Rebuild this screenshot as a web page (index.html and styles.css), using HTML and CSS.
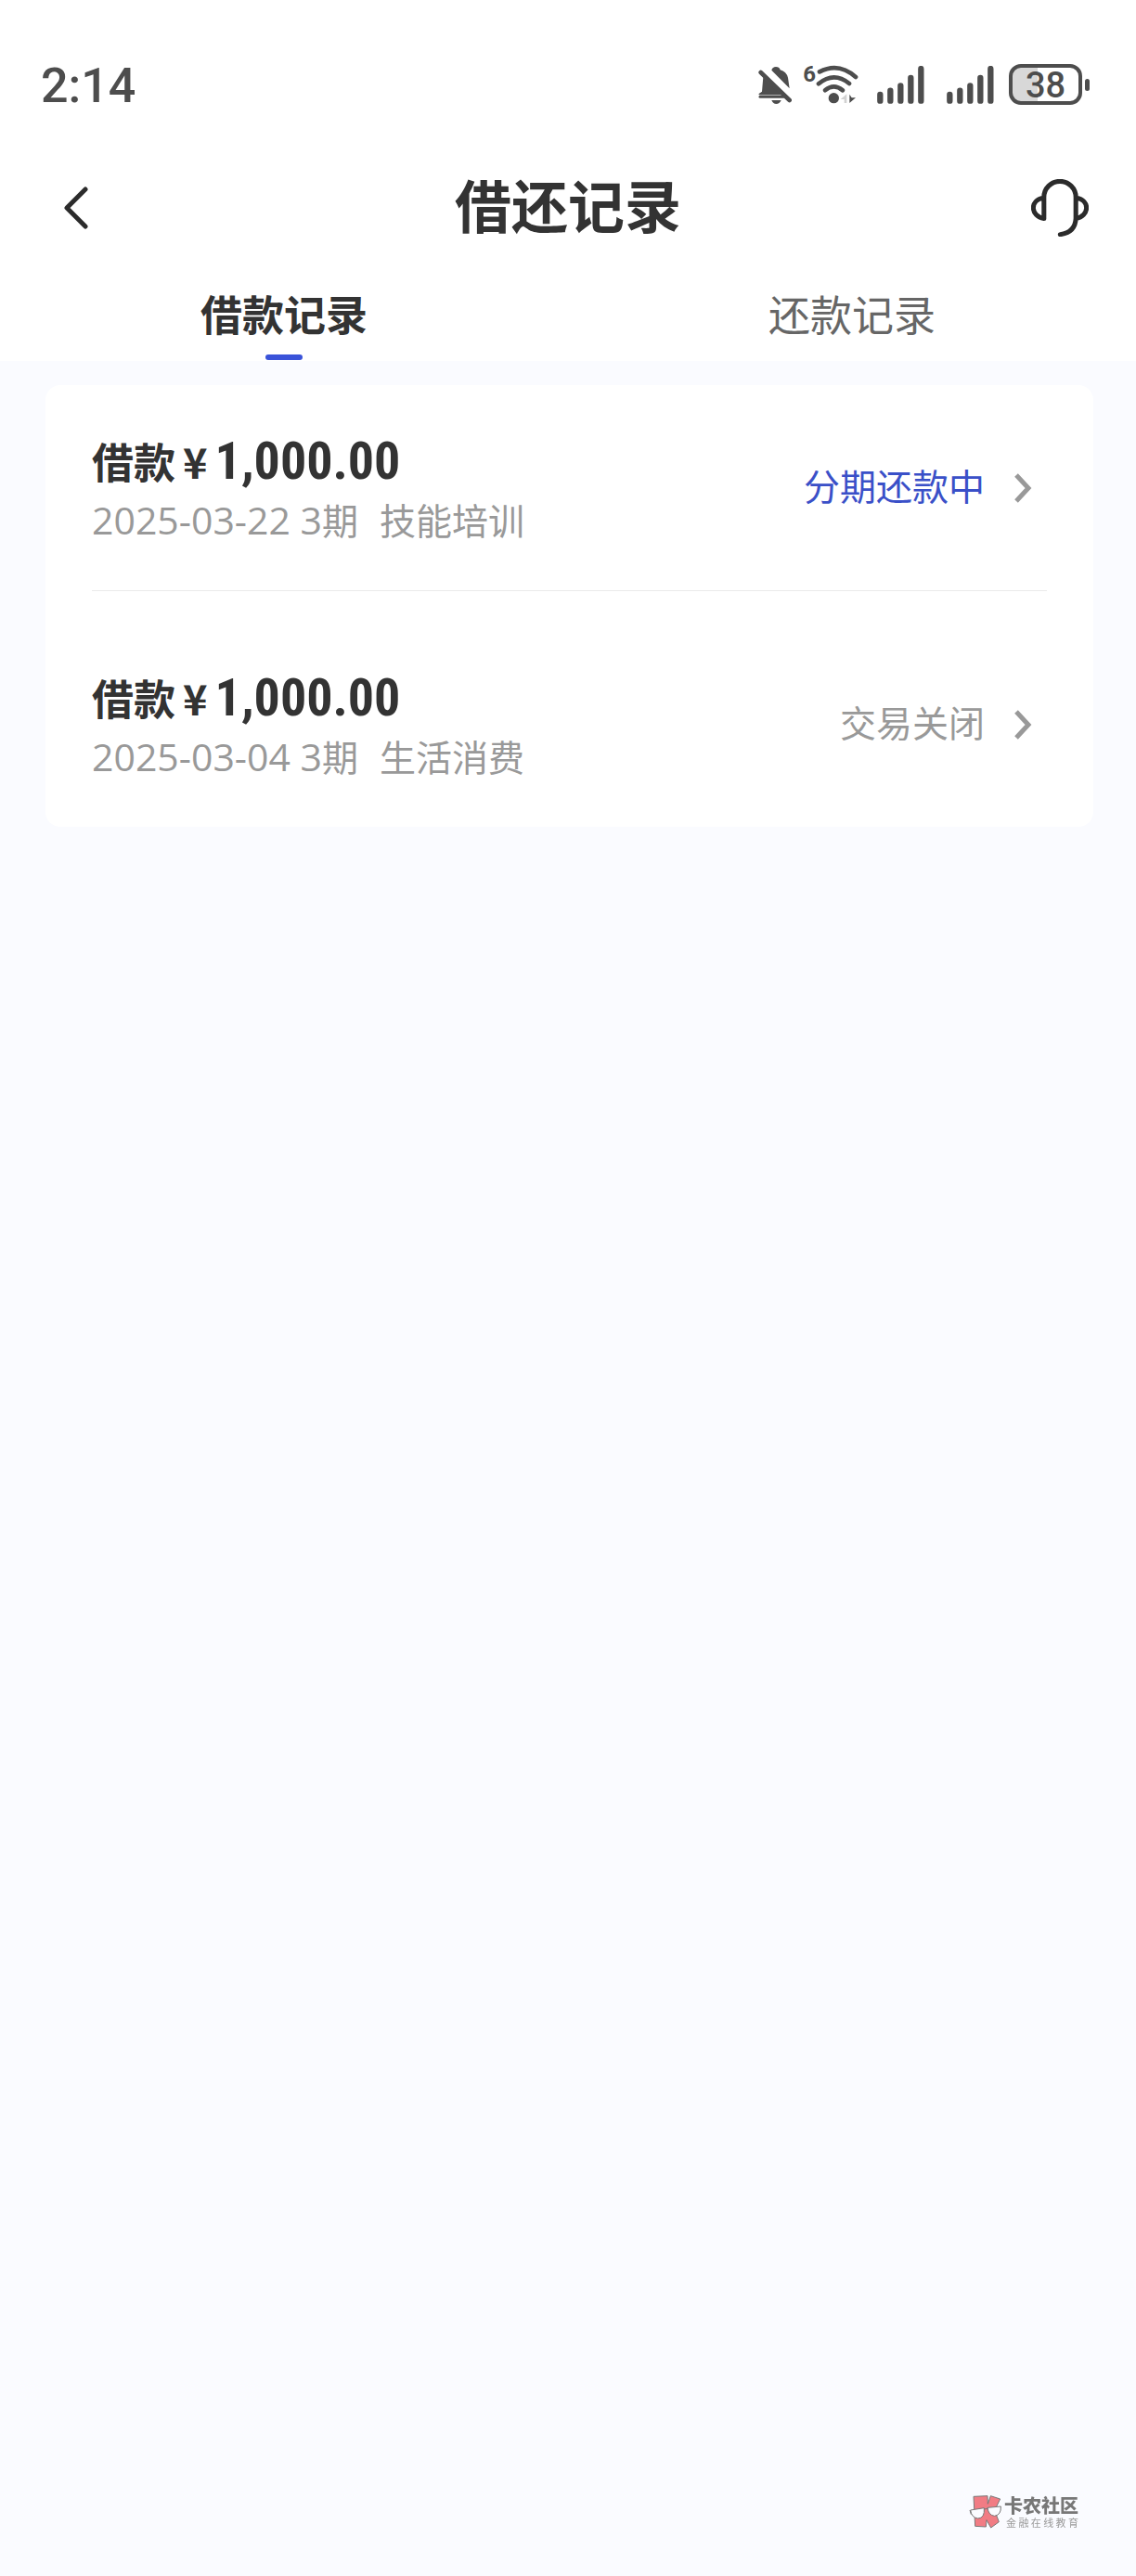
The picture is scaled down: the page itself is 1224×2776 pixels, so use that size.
FILE: index.html
```html
<!DOCTYPE html>
<html lang="zh-CN">
<head>
  <meta charset="UTF-8" />
  <meta name="viewport" content="width=device-width, initial-scale=1.0"/>
  <title>借还记录</title>
  <link rel="stylesheet" href="styles.css">
</head>
<body>

  <!-- Header -->
  <header class="header">
    <div class="status-bar">
      <span class="time">2:14</span>
      <div class="status-icons">
        <svg class="icon-mute" viewBox="50 60 108 123" aria-hidden="true">
          <path d="M66 96 L126 154 H54 Q50 154 52 150 L62 143 Z M93 74 Q96 63 107 63 Q118 63 121 73 Q141 79 146 98 L151 133 Z" fill="#4d4d4d"/>
          <path d="M58 81 L151 171" stroke="#4d4d4d" stroke-width="14" stroke-linecap="round"/>
          <path d="M56 160 H132" stroke="#4d4d4d" stroke-width="9" stroke-linecap="round"/>
          <path d="M93 171 H124 Q119 183 108 183 Q98 183 93 171 Z" fill="#4d4d4d"/>
        </svg>
        <div class="wifi">
          <span class="wifi-gen">6</span>
          <svg class="icon-wifi" viewBox="234 60 138 126" aria-hidden="true">
            <g fill="none" stroke="#4d4d4d" stroke-width="14" stroke-linecap="round">
              <path d="M246 82 Q308 50 363 99"/>
              <path d="M243 121 Q292 80 342 120"/>
              <path d="M264 142 Q292 118 321 142"/>
            </g>
            <circle cx="292" cy="167" r="17" fill="#4d4d4d"/>
            <path d="M314 171 L334 154 V183 H326 V171 Z" fill="#d2d2d2"/>
            <path d="M343 155 L350 166 H363 L343 183 Z" fill="#4d4d4d"/>
          </svg>
        </div>
        <svg class="icon-signal" viewBox="436 62 153 123" aria-hidden="true">
          <path d="M446 155 V175 M479 142 V175 M512 126 V175 M545 101 V175 M578 71 V175" stroke="#4d4d4d" stroke-width="19" stroke-linecap="round"/>
        </svg>
        <svg class="icon-signal" viewBox="436 62 153 123" aria-hidden="true">
          <path d="M446 155 V175 M479 142 V175 M512 126 V175 M545 101 V175 M578 71 V175" stroke="#4d4d4d" stroke-width="19" stroke-linecap="round"/>
        </svg>
        <div class="battery"><span class="battery-level">38</span></div>
      </div>
    </div>

    <div class="nav-bar">
      <button class="nav-btn" type="button" aria-label="返回">
        <svg class="icon-back" viewBox="0 0 26 46" aria-hidden="true">
          <path d="M23 3 L3 23 L23 43" fill="none" stroke="#2b2b2b" stroke-width="5" stroke-linecap="round" stroke-linejoin="round"/>
        </svg>
      </button>
      <h1 class="nav-title">借还记录</h1>
      <button class="nav-btn" type="button" aria-label="客服">
        <svg class="icon-service" viewBox="65 64 184 184" aria-hidden="true">
          <path d="M106 190 V122 A51 51 0 0 1 208 122 V190 Q206 235 158 241 M106 190 C62 182 60 132 104 124 M210 124 C254 132 252 182 208 190" fill="none" stroke="#2b2b2b" stroke-width="15" stroke-linecap="round" stroke-linejoin="round"/>
        </svg>
      </button>
    </div>

    <nav class="tabs">
      <a class="tab active" href="#borrow">借款记录</a>
      <a class="tab" href="#repay">还款记录</a>
    </nav>
  </header>

  <!-- Record List -->
  <main class="card" id="borrow">
    <a class="record" href="#record-1">
      <div class="record-info">
        <p class="record-title">借款<span class="currency">¥</span><span class="amount">1,000.00</span></p>
        <p class="record-desc"><span class="date">2025-03-22 3</span>期<span class="purpose">技能培训</span></p>
      </div>
      <span class="record-status repaying">分期还款中</span>
      <svg class="icon-arrow" viewBox="0 0 20 34" aria-hidden="true">
        <path d="M3 3 L16 17 L3 31" fill="none" stroke="#999" stroke-width="5"/>
      </svg>
    </a>
    <a class="record" href="#record-2">
      <div class="record-info">
        <p class="record-title">借款<span class="currency">¥</span><span class="amount">1,000.00</span></p>
        <p class="record-desc"><span class="date">2025-03-04 3</span>期<span class="purpose">生活消费</span></p>
      </div>
      <span class="record-status">交易关闭</span>
      <svg class="icon-arrow" viewBox="0 0 20 34" aria-hidden="true">
        <path d="M3 3 L16 17 L3 31" fill="none" stroke="#999" stroke-width="5"/>
      </svg>
    </a>
  </main>

  <!-- Watermark -->
  <div class="watermark">
    <svg class="watermark-logo" viewBox="42 56 106 108" aria-hidden="true">
      <path d="M56 60 L101 58 L102 84 L111 58 L142 68 L124 105 L138 142 L112 161 L98 136 L96 158 L61 156 Z" fill="#f17c84" stroke="#777" stroke-width="3"/>
      <path d="M46 104 L90 97 Q93 130 70 131 Q49 128 46 104 Z M101 96 L144 92 Q146 119 124 123 Q104 121 101 96 Z" fill="#fafbff" stroke="#777" stroke-width="3"/>
      <path d="M89 101 L102 99 M44 104 L48 118" stroke="#777" stroke-width="3"/>
    </svg>
    <div class="watermark-text">
      <p class="watermark-name">卡农社区</p>
      <p class="watermark-slogan">金融在线教育</p>
    </div>
  </div>

</body>
</html>
```
FILE: styles.css
```css
* {
  box-sizing: border-box;
  margin: 0;
  padding: 0;
}

body {
  min-height: 100vh;
  font-family: 'Noto Sans CJK SC', sans-serif;
  background: #fafbff;
  color: #333;
}

a {
  color: inherit;
  text-decoration: none;
}

svg {
  display: block;
  flex-shrink: 0;
}

.header {
  background: #fff;
}

/* status bar */
.status-bar {
  display: flex;
  align-items: center;
  justify-content: space-between;
  height: 182px;
  padding: 0 50px 0 44px;
}

.time {
  padding-top: 4px;
  font-family: Roboto, sans-serif;
  font-size: 52px;
  font-weight: 500;
  line-height: 60px;
  color: #4d4d4d;
}

.status-icons {
  display: flex;
  align-items: center;
}

.icon-mute {
  width: 36px;
  height: 41px;
}

.wifi {
  display: flex;
  align-items: flex-start;
  margin: 0 20px 0 12px;
}

.wifi-gen {
  font-family: Roboto, sans-serif;
  font-size: 24px;
  font-weight: bold;
  line-height: 20px;
  color: #4d4d4d;
}

.icon-wifi {
  width: 46px;
  height: 42px;
}

.icon-signal {
  width: 51px;
  height: 41px;
  margin-right: 24px;
}

.icon-signal + .icon-signal {
  margin-right: 16px;
}

.battery {
  position: relative;
  width: 79px;
  height: 44px;
  margin-right: 8px;
  border: 4px solid #4d4d4d;
  border-radius: 13px;
  background: linear-gradient(to right, #d8d8d8 38%, #fff 38%);
  text-align: center;
}

.battery::after {
  content: "";
  position: absolute;
  top: 12px;
  right: -12px;
  width: 5px;
  height: 13px;
  border-radius: 3px;
  background: #4d4d4d;
}

.battery-level {
  display: block;
  font-family: Roboto, sans-serif;
  font-size: 38px;
  font-weight: 500;
  line-height: 38px;
  color: #4d4d4d;
}

/* nav bar */
.nav-bar {
  display: flex;
  align-items: center;
  justify-content: space-between;
  height: 84px;
  padding: 0 50px;
}

.nav-btn {
  display: flex;
  align-items: center;
  justify-content: center;
  width: 64px;
  height: 64px;
  border: none;
  background: none;
  cursor: pointer;
}

.nav-title {
  padding-bottom: 8px;
  font-size: 61px;
  font-weight: bold;
  line-height: 84px;
}

.icon-back {
  width: 26px;
  height: 46px;
}

.icon-service {
  width: 62px;
  height: 62px;
}

/* tabs */
.tabs {
  display: flex;
  height: 123px;
}

.tab {
  position: relative;
  flex: 1;
  padding-top: 39px;
  font-size: 45px;
  line-height: 66px;
  text-align: center;
  color: #666;
}

.tab.active {
  font-weight: bold;
  color: #333;
}

.tab.active::after {
  content: "";
  position: absolute;
  left: 50%;
  bottom: 1px;
  width: 40px;
  height: 6px;
  margin-left: -20px;
  border-radius: 3px;
  background: #3a53d9;
}

/* records */
.card {
  margin: 26px 46px 0 49px;
  padding: 0 50px;
  border-radius: 16px;
  background: #fff;
}

.record {
  display: flex;
  align-items: center;
  height: 221px;
}

.record + .record {
  height: 255px;
  padding-top: 34px;
  border-top: 1px solid #ebebeb;
}

.record-info {
  flex: 1;
}

.record-title {
  font-size: 45px;
  font-weight: bold;
  line-height: 66px;
  white-space: nowrap;
}

.currency {
  margin: 0 8px;
}

.amount {
  font-family: 'Roboto Condensed', Roboto, sans-serif;
  font-size: 56px;
  line-height: 60px;
}

.record-desc {
  font-size: 39px;
  line-height: 58px;
  color: #999;
  white-space: nowrap;
}

.date {
  font-family: 'Open Sans', sans-serif;
  font-size: 41px;
  line-height: 50px;
}

.purpose {
  margin-left: 23px;
}

.record-status {
  padding-bottom: 8px;
  font-size: 39px;
  line-height: 58px;
  color: #999;
}

.record-status.repaying {
  color: #3a50c8;
}

.icon-arrow {
  width: 20px;
  height: 34px;
  margin: 0 16px 0 31px;
}

/* watermark */
.watermark {
  position: fixed;
  right: 62px;
  bottom: 51px;
  display: flex;
  align-items: center;
  gap: 2px;
}

.watermark-logo {
  width: 36px;
  height: 36px;
}

.watermark-name {
  font-size: 20px;
  font-weight: 900;
  line-height: 22px;
  color: #777;
}

.watermark-slogan {
  padding-left: 2px;
  font-size: 11px;
  line-height: 14px;
  color: #999;
  text-align: justify;
  text-align-last: justify;
}
```
